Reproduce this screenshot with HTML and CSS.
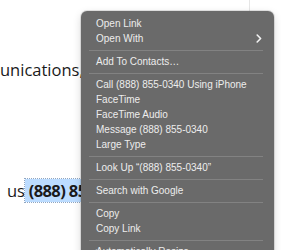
FILE: index.html
```html
<!DOCTYPE html>
<html lang="en">
<head>
    <meta charset="UTF-8">
    <meta name="viewport" content="width=device-width, initial-scale=1.0">
    <title>Context Menu</title>
    <link rel="stylesheet" href="styles.css">
</head>
<body>

    <!-- Page behind the menu -->
    <div class="page">
        <div class="article">
            <p class="line first">unications,</p>
            <p class="line second">us<span class="phone"> (888) 855-0340</span></p>
            <p class="line third">ent that the auth</p>
        </div>
        <div class="aside"></div>
    </div>

    <!-- Context Menu -->
    <div class="menu">
        <div class="item">Open Link</div>
        <div class="item submenu">
            Open With
            <svg class="chevron" width="6" height="9" viewBox="0 0 6 9">
                <polyline points="1.2,1 4.6,4.5 1.2,8" fill="none" stroke="#f2f2f2" stroke-width="1.6" stroke-linecap="round" stroke-linejoin="round"/>
            </svg>
        </div>
        <div class="sep"></div>
        <div class="item">Add To Contacts…</div>
        <div class="sep"></div>
        <div class="item">Call (888) 855-0340 Using iPhone</div>
        <div class="item">FaceTime</div>
        <div class="item">FaceTime Audio</div>
        <div class="item">Message (888) 855-0340</div>
        <div class="item">Large Type</div>
        <div class="sep"></div>
        <div class="item">Look Up “(888) 855-0340”</div>
        <div class="sep"></div>
        <div class="item">Search with Google</div>
        <div class="sep"></div>
        <div class="item">Copy</div>
        <div class="item">Copy Link</div>
        <div class="sep"></div>
        <div class="item"><span class="check">✓</span>Automatically Resize</div>
    </div>

</body>
</html>
```

FILE: styles.css
```css
body {
    margin: 0;
    background-color: #ffffff;
    font-family: "Open Sans", sans-serif;
    color: #1a1a1a;
    overflow: hidden;
}

/* Page behind */
.page {
    display: flex;
    height: 250px;
    overflow: hidden;
}
.article {
    width: 249px;
    flex-shrink: 0;
    border-right: 1px solid #e6e6e6;
}
.aside {
    flex-grow: 1;
}
.line {
    margin: 0;
    font-size: 16.5px;
    line-height: 22px;
    white-space: nowrap;
}
.first {
    margin-top: 59px;
}
.second {
    margin-top: 99px;
    padding-left: 7px;
}
.third {
    margin-top: 44px;
    padding-left: 20px;
}
.phone {
    font-weight: bold;
    letter-spacing: -0.6px;
    background-color: #bcdcff;
    outline: 1px dotted #8fa6c2;
}

/* Context Menu */
.menu {
    position: absolute;
    left: 81px;
    top: 11px;
    width: 193px;
    height: 260px;
    padding-top: 5px;
    background-color: #6a6a6a;
    border-radius: 6px;
    box-shadow: 0 0 0 1px rgba(0, 0, 0, 0.1), 0 3px 9px rgba(0, 0, 0, 0.16);
    font-family: "Liberation Sans", Arial, sans-serif;
    font-size: 10px;
    color: #ededed;
}
.item {
    display: flex;
    align-items: center;
    height: 15px;
    padding-left: 15px;
    padding-right: 12px;
    white-space: nowrap;
}
.submenu {
    justify-content: space-between;
}
.sep {
    height: 1px;
    margin: 4px 11px 3px 8px;
    background-color: #828282;
}
.check {
    width: 5px;
    margin-left: -5px;
    margin-right: 0;
    font-size: 9px;
}
```
